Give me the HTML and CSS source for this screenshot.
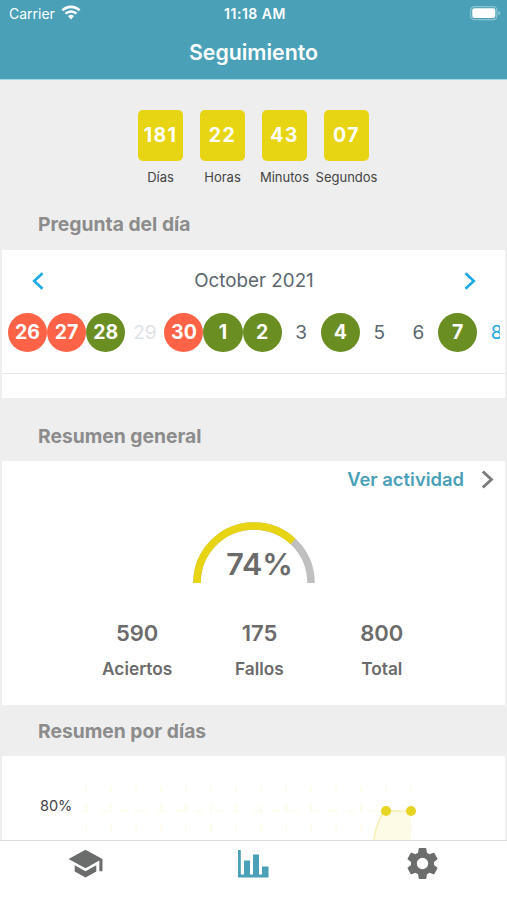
FILE: index.html
```html
<!DOCTYPE html>
<html lang="es">
<head>
  <meta charset="utf-8">
  <meta name="viewport" content="width=device-width, initial-scale=1">
  <title>Seguimiento</title>
  <link rel="stylesheet" href="styles.css">
</head>
<body>
  <header class="header">
    <div class="status">
      <div class="carrier">
        <span>Carrier</span>
        <svg width="20" height="15" viewBox="0 0 20 15" fill="none" stroke="#fff" stroke-width="2.6">
          <path d="M1.4 5.4a12.3 12.3 0 0 1 17.2 0"/>
          <path d="M4.5 8.7a7.8 7.8 0 0 1 11 0"/>
          <path d="M10 14.4l-3-3.1a4.3 4.3 0 0 1 6 0z" fill="#fff" stroke="none"/>
        </svg>
      </div>
      <span class="clock">11:18 AM</span>
      <svg class="battery" width="31" height="15" viewBox="0 0 31 15">
        <rect x=".7" y=".7" width="26.2" height="13" rx="3.6" fill="none" stroke="#8cc3d1" stroke-width="1.2"/>
        <rect x="2.3" y="2.3" width="23" height="9.8" rx="2" fill="#fff"/>
        <path d="M28.4 5v4.4c1.2-.4 1.9-1.2 1.9-2.2s-.7-1.8-1.9-2.2z" fill="#8cc3d1"/>
      </svg>
    </div>
    <h1 class="title">Seguimiento</h1>
  </header>

  <main class="content">
    <div class="countdown">
      <div class="unit"><b>181</b><span>Días</span></div>
      <div class="unit"><b>22</b><span>Horas</span></div>
      <div class="unit"><b>43</b><span>Minutos</span></div>
      <div class="unit"><b>07</b><span>Segundos</span></div>
    </div>

    <h2 class="section-title first-title">Pregunta del día</h2>
    <section class="card calendar">
      <div class="month">
        <svg width="12" height="18" viewBox="0 0 12 18" fill="none" stroke="#1ba9e8" stroke-width="2.6"><path d="M10.5 1.2L2.2 9l8.3 7.8"/></svg>
        <span>October 2021</span>
        <svg width="12" height="18" viewBox="0 0 12 18" fill="none" stroke="#1ba9e8" stroke-width="2.6"><path d="M1.5 1.2L9.8 9l-8.3 7.8"/></svg>
      </div>
      <div class="days">
        <span class="day wrong">26</span>
        <span class="day wrong">27</span>
        <span class="day right">28</span>
        <span class="day off">29</span>
        <span class="day wrong">30</span>
        <span class="day right">1</span>
        <span class="day right">2</span>
        <span class="day">3</span>
        <span class="day right">4</span>
        <span class="day">5</span>
        <span class="day">6</span>
        <span class="day right">7</span>
        <span class="day today">8</span>
      </div>
    </section>

    <h2 class="section-title general-title">Resumen general</h2>
    <section class="card general">
      <a class="activity">
        <span>Ver actividad</span>
        <svg width="13" height="19" viewBox="0 0 13 19" fill="none" stroke="#7d7d7d" stroke-width="3"><path d="M1.8 1.5l8.6 8-8.6 8"/></svg>
      </a>
      <div class="gauge">
        <svg width="124" height="63" viewBox="0 0 124 63" fill="none" stroke-width="7.5">
          <path d="M5 62a57 57 0 0 1 114 0" stroke="#bfbfbf"/>
          <path d="M5 62a57 57 0 0 1 114 0" stroke="#e7d514" pathLength="100" stroke-dasharray="74 100"/>
        </svg>
        <span class="percent">74%</span>
      </div>
      <div class="totals">
        <div><b>590</b><span>Aciertos</span></div>
        <div><b>175</b><span>Fallos</span></div>
        <div><b>800</b><span>Total</span></div>
      </div>
    </section>

    <h2 class="section-title days-title">Resumen por días</h2>
    <section class="card chart">
      <span class="axis">80%</span>
      <svg width="350" height="84" viewBox="0 0 350 84" fill="none">
        <path d="M10 30V84M35 30V84M60 30V84M85 30V84M110 30V84M135 30V84M160 30V84M185 30V84M210 30V84M235 30V84M260 30V84M285 30V84M310 30V84M335 30V84" stroke="#fbf8dc" stroke-dasharray="7 12"/>
        <path d="M5 55H346" stroke="#fcfae3" stroke-dasharray="9 10"/>
        <path d="M298 84C300 70 303 60 310 55H335V84z" fill="#fdfbe6"/>
        <path d="M298 84C300 70 303 60 310 55H335" stroke="#f4eeb0" stroke-width="1.5"/>
        <circle cx="310" cy="55" r="5" fill="#e7d524"/>
        <circle cx="335" cy="55" r="5" fill="#e7d524"/>
      </svg>
    </section>
  </main>

  <nav class="tabs">
    <a class="tab school">
      <svg width="37" height="37" viewBox="0 0 24 24" fill="#6b6c6c"><path d="M5 13.18v4L12 21l7-3.82v-4L12 17l-7-3.82zM12 3L1 9l11 6 9-4.91V17h2V9L12 3z"/></svg>
    </a>
    <a class="tab">
      <svg width="31" height="28" viewBox="0 0 31 28" fill="#4aa1b7"><path d="M0 0h2.8v24.5H6V10.5h6v14h3V4.5h6v20h3v-8h6.5v11H0z"/></svg>
    </a>
    <a class="tab">
      <svg width="37" height="37" viewBox="0 0 24 24" fill="#6b6c6c"><path d="M19.43 12.98c.04-.32.07-.64.07-.98s-.03-.66-.07-.98l2.11-1.65c.19-.15.24-.42.12-.64l-2-3.46c-.12-.22-.39-.3-.61-.22l-2.49 1c-.52-.4-1.08-.73-1.69-.98l-.38-2.65C14.46 2.18 14.25 2 14 2h-4c-.25 0-.46.18-.49.42l-.38 2.65c-.61.25-1.17.59-1.69.98l-2.49-1c-.23-.09-.49 0-.61.22l-2 3.46c-.13.22-.07.49.12.64l2.11 1.65c-.04.32-.07.65-.07.98s.03.66.07.98l-2.11 1.65c-.19.15-.24.42-.12.64l2 3.46c.12.22.39.3.61.22l2.49-1c.52.4 1.08.73 1.69.98l.38 2.65c.03.24.24.42.49.42h4c.25 0 .46-.18.49-.42l.38-2.65c.61-.25 1.17-.59 1.69-.98l2.49 1c.23.09.49 0 .61-.22l2-3.46c.12-.22.07-.49-.12-.64l-2.11-1.65zM12 15.7a3.7 3.7 0 1 1 0-7.4 3.7 3.7 0 0 1 0 7.4z"/></svg>
    </a>
  </nav>
</body>
</html>
```
FILE: styles.css
```css
* {
  box-sizing: border-box;
}
body {
  margin: 0;
  height: 900px;
  display: flex;
  flex-direction: column;
  overflow: hidden;
  background: #eee;
  color: #6b6b6b;
  font-family: Inter, "Liberation Sans", sans-serif;
}
svg {
  display: block;
}

/* header */
.header {
  height: 80px;
  flex: none;
  background: #4aa1b7;
  border-bottom: 1px solid #a9d8e4;
  color: #fff;
}
.status {
  height: 27px;
  padding: 0 6px 0 9px;
  display: grid;
  grid-template-columns: 1fr auto 1fr;
  align-items: center;
  font-size: 14px;
}
.carrier {
  display: flex;
  align-items: center;
  gap: 6px;
}
.carrier svg {
  margin-top: -2px;
}
.clock {
  font-size: 14px;
  font-weight: 600;
  letter-spacing: 0.5px;
}
.battery {
  justify-self: end;
}
.title {
  margin: 0;
  line-height: 50px;
  text-align: center;
  font-size: 21.3px;
  font-weight: 600;
}

/* countdown */
.content {
  flex: 1;
  min-height: 0;
  overflow: hidden;
}
.countdown {
  height: 118px;
  padding-top: 30px;
  display: flex;
  justify-content: center;
}
.unit {
  width: 62px;
  display: flex;
  flex-direction: column;
  align-items: center;
  color: #444;
  font-size: 13px;
}
.unit b {
  width: 45px;
  height: 51px;
  margin-bottom: 6px;
  border-radius: 5px;
  background: #e7d514;
  color: #fff;
  font-size: 19.5px;
  letter-spacing: 1.4px;
  line-height: 51px;
  text-align: center;
}
.unit span {
  line-height: 20px;
  white-space: nowrap;
}

.section-title {
  margin: 0;
  padding-left: 38px;
  color: #8c8c8c;
  font-size: 19.3px;
  font-weight: 700;
}
.first-title {
  height: 52px;
  line-height: 53px;
}
.general-title {
  height: 63px;
  line-height: 77px;
}
.days-title {
  height: 51px;
  line-height: 52px;
}
.card {
  margin: 0 2px;
  background: #fff;
}

/* week calendar */
.calendar {
  height: 148px;
}
.month {
  height: 61px;
  padding: 0 29px 0 30px;
  display: flex;
  align-items: center;
  justify-content: space-between;
  color: #5c6670;
  font-size: 18.8px;
}
.days {
  height: 63px;
  padding: 2px 6px 0;
  display: flex;
  border-bottom: 1px solid #e8e8e8;
  overflow: hidden;
}
.day {
  width: 39.1px;
  height: 39.1px;
  flex: none;
  border-radius: 50%;
  color: #5c6670;
  font-size: 19px;
  line-height: 39px;
  text-align: center;
}
.wrong,
.right {
  color: #fff;
  font-size: 19.5px;
  font-weight: 700;
}
.wrong {
  background: #ff6347;
}
.right {
  background: #6b8e23;
}
.off {
  color: #dfe3e7;
}
/* last day is cut by the edge of the strip */
.today {
  width: 22.5px;
  padding-left: 13.5px;
  border-radius: 0;
  overflow: hidden;
  color: #1ba9e8;
  text-align: left;
}

/* general summary */
.general {
  height: 244px;
}
.activity {
  height: 37px;
  padding-right: 11px;
  display: flex;
  align-items: center;
  justify-content: flex-end;
  gap: 17px;
  color: #4aa1b7;
  font-size: 18.4px;
  font-weight: 600;
}
.activity span {
  padding-bottom: 2px;
}
.gauge {
  height: 63px;
  margin-top: 23px;
  display: grid;
  justify-content: center;
}
.gauge svg,
.percent {
  grid-area: 1 / 1;
}
.percent {
  padding: 22px 0 0 12px;
  font-size: 30.5px;
  font-weight: 600;
  line-height: 42px;
  text-align: center;
}
.totals {
  margin-top: 34px;
  padding-left: 74px;
  display: flex;
}
.totals div {
  width: 122.3px;
  display: flex;
  flex-direction: column;
  align-items: center;
}
.totals b {
  font-size: 22px;
  font-weight: 600;
  line-height: 30px;
}
.totals span {
  margin-top: 8px;
  font-size: 17.3px;
  font-weight: 600;
  line-height: 26px;
}

/* chart */
.chart {
  height: 84px;
  display: flex;
}
.axis {
  width: 74px;
  padding: 40px 0 0 38px;
  color: #444;
  font-size: 14.5px;
  line-height: 20px;
}

/* tab bar */
.tabs {
  height: 60px;
  flex: none;
  display: grid;
  grid-template-columns: repeat(3, 1fr);
  background: #fff;
  border-top: 1px solid #dedede;
}
.tab {
  height: 45px;
  display: flex;
  align-items: center;
  justify-content: center;
}
.school {
  height: 44px;
  padding-left: 2px;
}
```
